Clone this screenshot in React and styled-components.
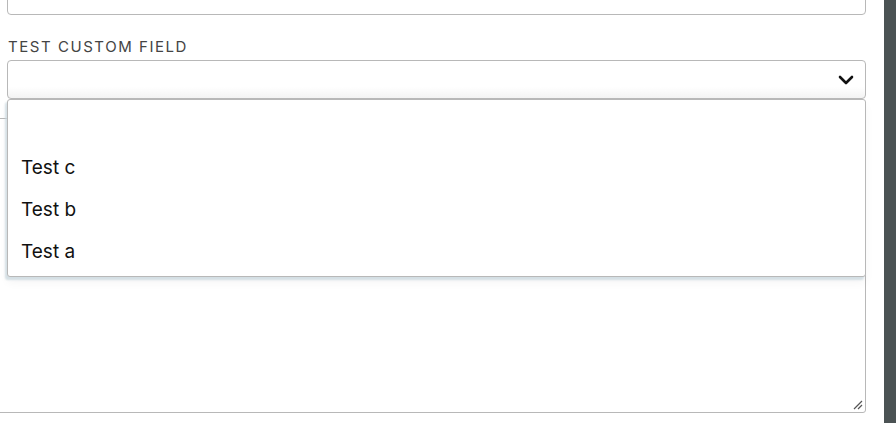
import React from "react";
import styled, { createGlobalStyle } from "styled-components";

const Global = createGlobalStyle`
  html, body { margin: 0; padding: 0; background: #fff; overflow: hidden; }
  body { font-family: Inter, Roboto, "Noto Sans", Arial, sans-serif; }
`;

const Page = styled.div`
  display: flex;
  width: 896px;
  height: 423px;
  overflow: hidden;
`;

const Content = styled.div`
  flex: 1;
  padding: 0 18px 0 7px;
  display: flex;
  flex-direction: column;
`;

const Scrollbar = styled.div`
  width: 12px;
  background: #4b5354;
`;

const TopInput = styled.div`
  height: 40px;
  margin-top: -27px;
  border: 1px solid #b8b8b8;
  border-radius: 4px;
  background: #fff;
`;

const Label = styled.div`
  margin-top: 24px;
  margin-left: 1px;
  font-size: 15px;
  line-height: 16px;
  letter-spacing: 1.55px;
  color: #444;
  text-transform: uppercase;
`;

const SelectWrap = styled.div`
  position: relative;
  margin-top: 5px;
`;

const SelectBox = styled.div`
  height: 37px;
  border: 1px solid #b8b8b8;
  border-radius: 4px;
  background: linear-gradient(to bottom, #fff 0%, #fff 70%, #f3f3f3 100%);
  display: flex;
  align-items: center;
  justify-content: flex-end;
  padding-right: 11px;
`;

const Dropdown = styled.ul`
  position: absolute;
  top: 39px;
  left: 0;
  right: 0;
  margin: 0;
  padding: 4px 0 4px;
  list-style: none;
  background: #fff;
  border: 1px solid #b8b8b8;
  border-radius: 3px;
  box-shadow: -2px 3px 2px rgba(200, 215, 222, 0.75), 0 6px 10px rgba(0, 0, 0, 0.04);
  z-index: 2;
`;

const Option = styled.li`
  height: 42px;
  padding: 0 13px;
  display: flex;
  align-items: center;
  font-size: 19px;
  color: #111;
`;

const TextArea = styled.div`
  position: relative;
  margin-top: 19px;
  margin-left: -20px;
  height: 293px;
  border: 1px solid #b8b8b8;
  border-radius: 0 0 3px 0;
  background: #fff;
`;

const Resize = styled.svg`
  position: absolute;
  right: 2px;
  bottom: 2px;
`;

export default function App() {
  return (
    <Page>
      <Global />
      <Content>
        <TopInput />
        <Label>Test custom field</Label>
        <SelectWrap>
          <SelectBox>
            <svg width="16" height="10" viewBox="0 0 16 10">
              <path d="M2 2l6 6 6-6" fill="none" stroke="#111" strokeWidth="2.6" strokeLinecap="round" strokeLinejoin="round" />
            </svg>
          </SelectBox>
          <Dropdown>
            <Option>&nbsp;</Option>
            <Option>Test c</Option>
            <Option>Test b</Option>
            <Option>Test a</Option>
          </Dropdown>
        </SelectWrap>
        <TextArea>
          <Resize width="10" height="10" viewBox="0 0 10 10">
            <path d="M1 9L9 1M5 9L9 5" stroke="#555" strokeWidth="1.2" />
          </Resize>
        </TextArea>
      </Content>
      <Scrollbar />
    </Page>
  );
}
